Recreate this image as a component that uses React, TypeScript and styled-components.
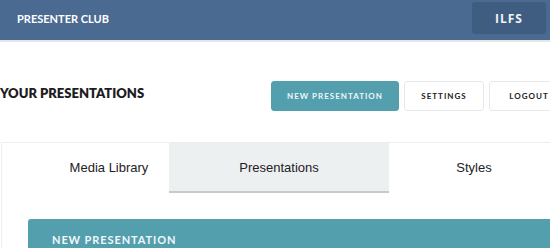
import styled, { createGlobalStyle } from 'styled-components';

const GlobalStyle = createGlobalStyle`
  html, body {
    margin: 0;
    padding: 0;
    background: #fff;
    overflow: hidden;
  }
  * {
    box-sizing: border-box;
  }
`;

const Page = styled.div`
  width: 550px;
  height: 248px;
  overflow: hidden;
`;

const TopBar = styled.header`
  height: 42px;
  background: #4a6a92;
  border-bottom: 2px solid #e4e6e8;
  display: flex;
  align-items: flex-start;
  justify-content: space-between;
  padding: 2px 4px 0 17px;
`;

const Brand = styled.div`
  font-family: 'Lato', 'Open Sans', sans-serif;
  font-weight: 700;
  font-size: 11px;
  color: #fff;
  line-height: 33px;
`;

const UserBox = styled.div`
  width: 74px;
  height: 32px;
  border-radius: 3px;
  background: #3f5d81;
  color: #f0f3f7;
  font-family: 'Open Sans', sans-serif;
  font-weight: 700;
  font-size: 12px;
  letter-spacing: 1px;
  display: flex;
  align-items: center;
  justify-content: center;
`;

const HeadRow = styled.div`
  display: flex;
  align-items: flex-start;
  padding-top: 39px;
  height: 100px;
`;

const Title = styled.h1`
  margin: 1px 0 0 0;
  width: 271px;
  flex: none;
  font-family: 'Lato', 'Open Sans', sans-serif;
  font-weight: 800;
  font-size: 13px;
  color: #1c1c22;
  line-height: 23px;
`;

const Actions = styled.div`
  display: flex;
  gap: 5px;
  flex: none;
`;

const ActionButton = styled.button<{ $primary?: boolean; $w: number }>`
  width: ${(p) => p.$w}px;
  height: 30px;
  border-radius: 3px;
  border: 1px solid ${(p) => (p.$primary ? '#539fae' : '#e6e8ea')};
  background: ${(p) => (p.$primary ? '#539fae' : '#fff')};
  color: ${(p) => (p.$primary ? '#eef6f8' : '#222')};
  font-family: 'Lato', 'Open Sans', sans-serif;
  font-weight: 700;
  font-size: 8px;
  letter-spacing: 1px;
  padding: 0;
  cursor: pointer;
`;

const TabPanel = styled.section`
  margin-left: 1px;
  border: 1px solid #eceeef;
  border-right: none;
  height: 200px;
`;

const Tabs = styled.div`
  display: flex;
  height: 50px;
  border-bottom: 1px solid #eceeef;
`;

const Tab = styled.div<{ $active?: boolean; $w: number; $pad?: number }>`
  width: ${(p) => p.$w}px;
  flex: none;
  display: flex;
  align-items: center;
  justify-content: center;
  padding-left: ${(p) => p.$pad ?? 0}px;
  font-family: 'Liberation Sans', Arial, sans-serif;
  font-size: 13px;
  color: #222;
  background: ${(p) => (p.$active ? '#edf0f1' : '#fff')};
  border-bottom: 2px solid ${(p) => (p.$active ? '#c5cacc' : 'transparent')};
  margin-bottom: -1px;
`;

const Body = styled.div`
  padding: 26px 0 0 26px;
`;

const Banner = styled.div`
  height: 40px;
  background: #539fae;
  border-radius: 3px 0 0 0;
  padding: 14px 0 0 24px;
  font-family: 'Lato', 'Open Sans', sans-serif;
  font-weight: 700;
  font-size: 11px;
  letter-spacing: 0.9px;
  color: #f2f8fa;
`;

export default function App() {
  return (
    <Page>
      <GlobalStyle />
      <TopBar>
        <Brand>PRESENTER CLUB</Brand>
        <UserBox>ILFS</UserBox>
      </TopBar>
      <HeadRow>
        <Title>YOUR PRESENTATIONS</Title>
        <Actions>
          <ActionButton $primary $w={128}>NEW PRESENTATION</ActionButton>
          <ActionButton $w={80}>SETTINGS</ActionButton>
          <ActionButton $w={80}>LOGOUT</ActionButton>
        </Actions>
      </HeadRow>
      <TabPanel>
        <Tabs>
          <Tab $w={167} $pad={47}>Media Library</Tab>
          <Tab $w={220} $active>Presentations</Tab>
          <Tab $w={170}>Styles</Tab>
        </Tabs>
        <Body>
          <Banner>NEW PRESENTATION</Banner>
        </Body>
      </TabPanel>
    </Page>
  );
}
